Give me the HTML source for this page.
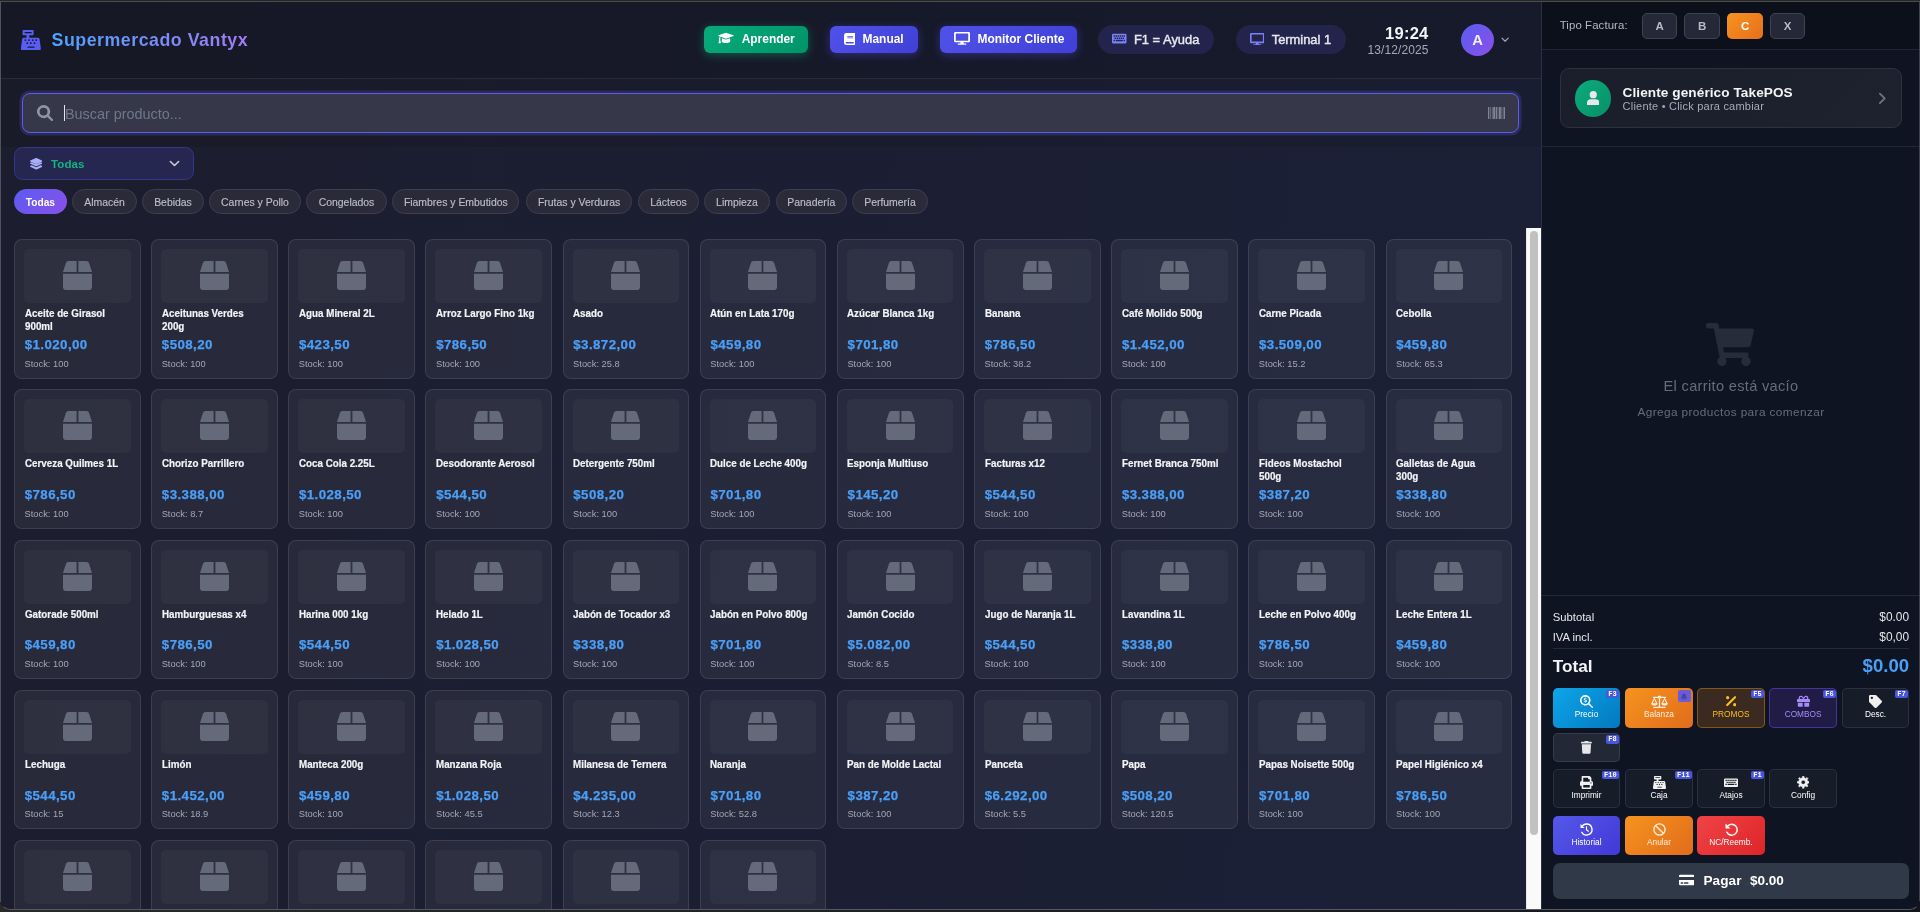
<!DOCTYPE html><html lang="es"><head><meta charset="utf-8"><title>Supermercado Vantyx - TakePOS</title><style>
*{box-sizing:border-box;margin:0;padding:0}
html,body{width:1920px;height:912px;overflow:hidden;background:linear-gradient(90deg,#2a2b27,#14151a)}
body{font-family:"Liberation Sans",sans-serif;color:#fff;position:relative;-webkit-font-smoothing:antialiased}
.abs{position:absolute}
#win{will-change:transform;position:absolute;left:0;top:0;width:1920px;height:910px;overflow:hidden;border-radius:0 0 10px 10px;background:#1a1a2e}
#left{position:absolute;left:1px;top:2px;width:1540px;height:908px;background:linear-gradient(95deg,#1c1d2e 0%,#1b2037 100%);overflow:hidden}
#header{position:absolute;left:0;top:0;width:1540px;height:77px;background:linear-gradient(90deg,#171826,#161a2b);border-bottom:1px solid #2b2c3a}
#searchsec{position:absolute;left:0;top:77px;width:1540px;height:68px;background:linear-gradient(90deg,#1a1b28,#191d31)}
#catsec{position:absolute;left:0;top:145px;width:1540px;height:82px}
.title{position:absolute;left:50.500px;top:27px;font-weight:bold;font-size:17.800px;line-height:22px;letter-spacing:.52px;white-space:nowrap;background:linear-gradient(90deg,#4ea4ff 0%,#7a8cf6 55%,#a27cf4 100%);-webkit-background-clip:text;background-clip:text;color:transparent}
.hbtn{position:absolute;top:24px;height:27px;border-radius:6px;color:#fff;font-weight:bold;font-size:11.950px;line-height:27.500px;white-space:nowrap}
.hbtn span{position:absolute;top:0}
.hbtn svg{position:absolute}
.pillh{position:absolute;top:23px;height:29px;border-radius:15px;background:#23244b;color:#e8e9f0;-webkit-text-stroke:.4px #e8e9f0;font-size:12.900px;line-height:29px;white-space:nowrap}
.pillh span{position:absolute;top:0}
.pillh svg{position:absolute}
.search{position:absolute;left:21px;top:14px;width:1497px;height:40px;border-radius:8px;background:#363748;border:1.500px solid #5a5df0;box-shadow:0 0 0 2.500px rgba(99,102,241,.22)}
.cat{position:absolute;top:42.300px;height:24.500px;border-radius:13px;border:1px solid #3d3e4f;background:#2a2a39;color:#bbbeca;font-size:10.450px;line-height:25.800px;-webkit-text-stroke:.15px #bbbeca;text-align:center;white-space:nowrap}
.cat.on{border:0;-webkit-text-stroke:0;font-size:10.200px;background:linear-gradient(135deg,#5a5cf0,#8a50ea);color:#fff;font-weight:bold;line-height:28.600px}
.card{position:absolute;width:126.700px;height:139.600px;border-radius:8px;background:rgba(255,255,255,.055);border:1px solid rgba(255,255,255,.15);background-clip:padding-box}
.card .img{position:absolute;left:9px;top:9px;width:106.600px;height:54px;border-radius:5px;background:rgba(255,255,255,.035)}
.card .img svg{position:absolute;left:38.700px;top:12px}
.card .nm{position:absolute;left:9.500px;top:67px;width:130px;font-size:10.600px;font-weight:bold;line-height:12.700px;color:#f3f4f6;-webkit-text-stroke:.2px #f3f4f6;white-space:nowrap;transform:scaleX(.925);transform-origin:0 0}
.card .pr{position:absolute;left:9.700px;top:95.900px;font-size:13.300px;letter-spacing:.42px;font-weight:bold;line-height:17px;color:#4a9ff8;-webkit-text-stroke:.25px #4a9ff8;white-space:nowrap}
.card .st{position:absolute;left:9.500px;top:117.600px;font-size:9.330px;line-height:12px;color:#a3a7b4;white-space:nowrap}
#right{position:absolute;left:1541px;top:2px;width:378px;height:908px;background:#0f1422;border-left:1px solid #2d3045;overflow:hidden}
.tf{position:absolute;top:11px;height:26px;border-radius:5px;border:1px solid #3e4352;background:#252937;color:#b6bac6;font-weight:bold;font-size:11.500px;line-height:24px;text-align:center}
.tf.on{border:0;background:linear-gradient(135deg,#f7931e,#e66f1c);color:#fff;line-height:26px}
.ab{position:absolute;width:67.700px;height:39.500px;border-radius:5px;font-size:8.300px;color:#fff;text-align:center}
.ab svg{position:absolute}
.ab .lb{position:absolute;left:0;width:100%;top:20.900px;line-height:10px;white-space:nowrap}
.ab .k{position:absolute;right:1.200px;top:2.100px;height:8.200px;padding:0 2.200px;background:#4a55e0;border-radius:2px;font-family:"Liberation Mono",monospace;font-weight:bold;font-size:7px;line-height:8.400px;color:#fff}
.dk{background:#171c29;box-shadow:inset 0 0 0 1px #2b3040}
</style></head><body>
<div id="win">
<div id="left">
<div id="header">
<div class="abs" style="left:20.300px;top:27.800px"><svg viewBox="0 0 512 512" width="19.8" height="20.2" preserveAspectRatio="none" fill="#585ef3" style="display:block;color:#585ef3;"><path fill-rule="evenodd" d="M61 0h246a20 20 0 0 1 20 20v93a20 20 0 0 1-20 20h-92v62h225a40 40 0 0 1 38 28l32 217v40a32 32 0 0 1-32 32H32a32 32 0 0 1-32-32v-40l32-217a40 40 0 0 1 38-28h73v-62H61a20 20 0 0 1-20-20V20A20 20 0 0 1 61 0zm44 52a15 15 0 0 0 0 30h158a15 15 0 0 0 0-30zM89 256a24 24 0 1 0 48 0a24 24 0 1 0-48 0zM184 256a24 24 0 1 0 48 0a24 24 0 1 0-48 0zM279 256a24 24 0 1 0 48 0a24 24 0 1 0-48 0zM370 256a24 24 0 1 0 48 0a24 24 0 1 0-48 0zM139 334a24 24 0 1 0 48 0a24 24 0 1 0-48 0zM230 334a24 24 0 1 0 48 0a24 24 0 1 0-48 0zM325 334a24 24 0 1 0 48 0a24 24 0 1 0-48 0zM184 420a16 16 0 0 0 0 32h153a16 16 0 0 0 0-32z"/></svg></div>
<div class="title">Supermercado Vantyx</div>
<div class="hbtn" style="left:703px;width:104px;background:linear-gradient(135deg,#08aa7a,#009468);box-shadow:0 2px 10px rgba(16,185,129,.4)"><svg viewBox="0 0 640 512" width="15.9" height="13.3" preserveAspectRatio="none" fill="#fff" style="display:block;color:#fff;position:absolute;left:14.299999999999955px;top:5.300000000000001px"><path d="M320 64L16 168c-14 5-14 22 0 27l58 20c-12 16-19 35-20 56c-11 6-18 18-18 31c0 12 6 23 15 29L20 452c-2 10 5 20 15 20h66c10 0 17-10 15-20L86 331c9-6 15-17 15-29c0-13-7-24-17-30c1-18 9-34 22-46l214 73L624 195c14-5 14-22 0-27z"/><path d="M330 330a32 32 0 0 1-20 0L160 279l-14 115c0 40 78 70 174 70s174-30 174-70l-14-115z"/></svg><span style="left:37.700000000000045px">Aprender</span></div>
<div class="hbtn" style="left:829px;width:88px;background:linear-gradient(135deg,#4f52e8,#4040d8);box-shadow:0 2px 10px rgba(79,70,229,.45)"><svg viewBox="0 0 448 512" width="11.4" height="12" preserveAspectRatio="none" fill="#fff" style="display:block;color:#fff;position:absolute;left:13.799999999999955px;top:6.5px"><path fill-rule="evenodd" d="M448 360V24a24 24 0 0 0-24-24H96A96 96 0 0 0 0 96v320a96 96 0 0 0 96 96h328a24 24 0 0 0 24-24v-16c0-8-4-14-9-19c-4-15-4-59 0-74c5-4 9-11 9-19zM128 134c0-3 3-6 6-6h212c3 0 6 3 6 6v20c0 3-3 6-6 6H134c-3 0-6-3-6-6zm0 64c0-3 3-6 6-6h212c3 0 6 3 6 6v20c0 3-3 6-6 6H134c-3 0-6-3-6-6zM381 448H96a32 32 0 0 1 0-64h285c-2 17-2 47 0 64z"/></svg><span style="left:32.5px">Manual</span></div>
<div class="hbtn" style="left:939px;width:137px;background:linear-gradient(135deg,#4f52e8,#4040d8);box-shadow:0 2px 10px rgba(79,70,229,.45)"><svg viewBox="0 0 576 512" width="16" height="12.7" preserveAspectRatio="none" fill="#fff" style="display:block;color:#fff;position:absolute;left:14px;top:5.899999999999999px"><path fill-rule="evenodd" d="M48 0h480a48 48 0 0 1 48 48v320a48 48 0 0 1-48 48H336l16 48h72a24 24 0 0 1 0 48H152a24 24 0 0 1 0-48h72l16-48H48a48 48 0 0 1-48-48V48A48 48 0 0 1 48 0zm16 64v288h448V64z"/></svg><span style="left:37.5px">Monitor Cliente</span></div>
<div class="pillh" style="left:1097px;width:116px"><svg viewBox="0 0 576 512" width="14.5" height="13.2" preserveAspectRatio="none" fill="#7b80f7" style="display:block;color:#7b80f7;position:absolute;left:14.200000000000045px;top:6.600000000000001px"><path fill-rule="evenodd" d="M48 64h480a48 48 0 0 1 48 48v288a48 48 0 0 1-48 48H48a48 48 0 0 1-48-48V112a48 48 0 0 1 48-48zM60 124h56v56h-56zM140 124h56v56h-56zM220 124h56v56h-56zM300 124h56v56h-56zM380 124h56v56h-56zM460 124h56v56h-56zM100 212h56v56h-56zM180 212h56v56h-56zM260 212h56v56h-56zM340 212h56v56h-56zM420 212h56v56h-56zM60 300h56v56H60zM460 300h56v56h-56zM148 300h280v56H148z"/></svg><span style="left:36px">F1 = Ayuda</span></div>
<div class="pillh" style="left:1235px;width:110px"><svg viewBox="0 0 576 512" width="14.5" height="12.5" preserveAspectRatio="none" fill="#7b80f7" style="display:block;color:#7b80f7;position:absolute;left:13.700000000000045px;top:7.5px"><path fill-rule="evenodd" d="M48 0h480a48 48 0 0 1 48 48v320a48 48 0 0 1-48 48H336l16 48h72a24 24 0 0 1 0 48H152a24 24 0 0 1 0-48h72l16-48H48a48 48 0 0 1-48-48V48A48 48 0 0 1 48 0zm16 64v288h448V64z"/></svg><span style="left:35.700000000000045px">Terminal 1</span></div>
<div class="abs" style="left:1347px;width:80.500px;top:22.500px;text-align:right;font-weight:bold;font-size:16.600px;line-height:18px;color:#f3f4f6;letter-spacing:.2px">19:24</div>
<div class="abs" style="left:1347px;width:80.500px;top:41.500px;text-align:right;font-size:12px;line-height:13px;color:#a4a8b6;letter-spacing:.1px">13/12/2025</div>
<div class="abs" style="left:1460px;top:22px;width:33px;height:32px;border-radius:50%;background:linear-gradient(135deg,#5a5cf0,#8a50ea);text-align:center;font-weight:bold;font-size:14.800px;line-height:32.500px;color:#efeff6">A</div>
<div class="abs" style="left:1500px;top:34.800px"><svg viewBox="0 0 24 16" width="8.2" height="5.4" preserveAspectRatio="none" fill="#a0a5b3" style="display:block;color:#a0a5b3;"><path d="M3 3.500l9 9l9-9" fill="none" stroke="currentColor" stroke-width="3.600" stroke-linecap="round" stroke-linejoin="round"/></svg></div>
</div>
<div id="searchsec"><div class="search">
<div class="abs" style="left:13.500px;top:11.200px"><svg viewBox="0 0 512 512" width="16.2" height="16.2" preserveAspectRatio="none" fill="#8e94a3" style="display:block;color:#8e94a3;"><path fill-rule="evenodd" d="M208 0a208 208 0 0 1 171 326L500 447a37 37 0 0 1-53 53L326 379A208 208 0 1 1 208 0zm0 84a124 124 0 1 0 0 248a124 124 0 0 0 0-248z"/></svg></div>
<div class="abs" style="left:41px;top:11px;width:1.200px;height:16.400px;background:#e5e7eb"></div>
<div class="abs" style="left:42px;top:9.800px;font-size:14.400px;line-height:20px;color:#6f788a;letter-spacing:0">Buscar producto...</div>
<div class="abs" style="left:1464.500px;top:12.500px"><svg viewBox="0 0 512 512" width="17.2" height="12.4" preserveAspectRatio="none" fill="#7f8393" style="display:block;color:#7f8393;"><rect x="0" y="0" width="38" height="512"/><rect x="58" y="0" width="19" height="512"/><rect x="115" y="0" width="19" height="512"/><rect x="154" y="0" width="57" height="512"/><rect x="230" y="0" width="38" height="512"/><rect x="288" y="0" width="19" height="512"/><rect x="326" y="0" width="57" height="512"/><rect x="403" y="0" width="19" height="512"/><rect x="442" y="0" width="19" height="512"/><rect x="474" y="0" width="38" height="512"/></svg></div>
</div></div>
<div id="catsec">
<div class="abs" style="left:13px;top:0px;width:180px;height:33px;border-radius:8.500px;background:#252750;border:1px solid #34378a">
<div class="abs" style="left:14.500px;top:9px"><svg viewBox="0 0 512 512" width="12.5" height="12.5" preserveAspectRatio="none" fill="#a9aef8" style="display:block;color:#a9aef8;"><path d="M12 148L244 43a29 29 0 0 1 24 0l232 105c16 7 16 30 0 38L268 291a29 29 0 0 1-24 0L12 186c-16-8-16-31 0-38z"/><path d="M500 238l-58-26l-161 73a60 60 0 0 1-50 0L70 212l-58 26c-16 7-16 30 0 37l232 105a29 29 0 0 0 24 0l232-105c16-7 16-30 0-37z"/><path d="M500 366l-58-26l-161 73a60 60 0 0 1-50 0L70 340l-58 26c-16 7-16 30 0 37l232 105a29 29 0 0 0 24 0l232-105c16-7 16-30 0-37z"/></svg></div>
<div class="abs" style="left:36px;top:8.600px;font-weight:bold;font-size:11.500px;line-height:15px;color:#12b580;letter-spacing:.1px">Todas</div>
<div class="abs" style="left:154px;top:12px"><svg viewBox="0 0 24 16" width="11" height="7" preserveAspectRatio="none" fill="#c5c8d4" style="display:block;color:#c5c8d4;"><path d="M3 3.500l9 9l9-9" fill="none" stroke="currentColor" stroke-width="3.600" stroke-linecap="round" stroke-linejoin="round"/></svg></div>
</div>
<div class="cat on" style="left:13.0px;width:52.7px">Todas</div>
<div class="cat" style="left:71.3px;width:64.4px">Almacén</div>
<div class="cat" style="left:141.3px;width:61.4px">Bebidas</div>
<div class="cat" style="left:208.3px;width:91.4px">Carnes y Pollo</div>
<div class="cat" style="left:305.3px;width:80.4px">Congelados</div>
<div class="cat" style="left:391.3px;width:127.0px">Fiambres y Embutidos</div>
<div class="cat" style="left:525.0px;width:106.3px">Frutas y Verduras</div>
<div class="cat" style="left:637.0px;width:61.0px">Lácteos</div>
<div class="cat" style="left:703.3px;width:65.4px">Limpieza</div>
<div class="cat" style="left:775.0px;width:70.7px">Panadería</div>
<div class="cat" style="left:851.3px;width:75.4px">Perfumería</div>
</div>
<div class="card" style="left:13.00px;top:237.20px"><div class="img"><svg viewBox="0 0 512 512" width="29" height="29" preserveAspectRatio="none" fill="#656a7b" style="display:block;color:#656a7b;"><path d="M509.5 184.6L458.900 32.800C452.400 13.200 434.100 0 413.400 0H272v192h238.700c-.4-2.500-.4-5-1.200-7.400zM240 0H98.600c-20.700 0-39 13.200-45.500 32.800L2.500 184.600c-.8 2.400-.8 4.900-1.200 7.400H240V0zM0 224v240c0 26.500 21.500 48 48 48h416c26.500 0 48-21.500 48-48V224H0z"/></svg></div><div class="nm">Aceite de Girasol<br>900ml</div><div class="pr">$1.020,00</div><div class="st">Stock: 100</div></div>
<div class="card" style="left:150.15px;top:237.20px"><div class="img"><svg viewBox="0 0 512 512" width="29" height="29" preserveAspectRatio="none" fill="#656a7b" style="display:block;color:#656a7b;"><path d="M509.5 184.6L458.900 32.800C452.400 13.200 434.100 0 413.400 0H272v192h238.700c-.4-2.500-.4-5-1.200-7.400zM240 0H98.600c-20.700 0-39 13.200-45.500 32.800L2.500 184.600c-.8 2.400-.8 4.900-1.200 7.400H240V0zM0 224v240c0 26.500 21.500 48 48 48h416c26.500 0 48-21.500 48-48V224H0z"/></svg></div><div class="nm">Aceitunas Verdes<br>200g</div><div class="pr">$508,20</div><div class="st">Stock: 100</div></div>
<div class="card" style="left:287.30px;top:237.20px"><div class="img"><svg viewBox="0 0 512 512" width="29" height="29" preserveAspectRatio="none" fill="#656a7b" style="display:block;color:#656a7b;"><path d="M509.5 184.6L458.900 32.800C452.400 13.200 434.100 0 413.400 0H272v192h238.700c-.4-2.500-.4-5-1.200-7.400zM240 0H98.600c-20.700 0-39 13.200-45.500 32.800L2.500 184.600c-.8 2.400-.8 4.900-1.200 7.400H240V0zM0 224v240c0 26.500 21.500 48 48 48h416c26.500 0 48-21.500 48-48V224H0z"/></svg></div><div class="nm">Agua Mineral 2L</div><div class="pr">$423,50</div><div class="st">Stock: 100</div></div>
<div class="card" style="left:424.45px;top:237.20px"><div class="img"><svg viewBox="0 0 512 512" width="29" height="29" preserveAspectRatio="none" fill="#656a7b" style="display:block;color:#656a7b;"><path d="M509.5 184.6L458.900 32.800C452.400 13.200 434.100 0 413.400 0H272v192h238.700c-.4-2.500-.4-5-1.200-7.400zM240 0H98.600c-20.700 0-39 13.200-45.500 32.800L2.500 184.600c-.8 2.400-.8 4.900-1.200 7.400H240V0zM0 224v240c0 26.500 21.500 48 48 48h416c26.500 0 48-21.500 48-48V224H0z"/></svg></div><div class="nm">Arroz Largo Fino 1kg</div><div class="pr">$786,50</div><div class="st">Stock: 100</div></div>
<div class="card" style="left:561.60px;top:237.20px"><div class="img"><svg viewBox="0 0 512 512" width="29" height="29" preserveAspectRatio="none" fill="#656a7b" style="display:block;color:#656a7b;"><path d="M509.5 184.6L458.900 32.800C452.400 13.200 434.100 0 413.400 0H272v192h238.700c-.4-2.500-.4-5-1.200-7.400zM240 0H98.600c-20.700 0-39 13.200-45.500 32.800L2.500 184.600c-.8 2.400-.8 4.900-1.200 7.400H240V0zM0 224v240c0 26.500 21.500 48 48 48h416c26.500 0 48-21.500 48-48V224H0z"/></svg></div><div class="nm">Asado</div><div class="pr">$3.872,00</div><div class="st">Stock: 25.8</div></div>
<div class="card" style="left:698.75px;top:237.20px"><div class="img"><svg viewBox="0 0 512 512" width="29" height="29" preserveAspectRatio="none" fill="#656a7b" style="display:block;color:#656a7b;"><path d="M509.5 184.6L458.900 32.800C452.400 13.200 434.100 0 413.400 0H272v192h238.700c-.4-2.500-.4-5-1.200-7.400zM240 0H98.600c-20.700 0-39 13.200-45.500 32.800L2.500 184.600c-.8 2.400-.8 4.900-1.200 7.400H240V0zM0 224v240c0 26.500 21.500 48 48 48h416c26.500 0 48-21.500 48-48V224H0z"/></svg></div><div class="nm">Atún en Lata 170g</div><div class="pr">$459,80</div><div class="st">Stock: 100</div></div>
<div class="card" style="left:835.90px;top:237.20px"><div class="img"><svg viewBox="0 0 512 512" width="29" height="29" preserveAspectRatio="none" fill="#656a7b" style="display:block;color:#656a7b;"><path d="M509.5 184.6L458.900 32.800C452.400 13.200 434.100 0 413.400 0H272v192h238.700c-.4-2.500-.4-5-1.200-7.400zM240 0H98.600c-20.700 0-39 13.200-45.500 32.800L2.500 184.600c-.8 2.400-.8 4.900-1.200 7.400H240V0zM0 224v240c0 26.500 21.500 48 48 48h416c26.500 0 48-21.500 48-48V224H0z"/></svg></div><div class="nm">Azúcar Blanca 1kg</div><div class="pr">$701,80</div><div class="st">Stock: 100</div></div>
<div class="card" style="left:973.05px;top:237.20px"><div class="img"><svg viewBox="0 0 512 512" width="29" height="29" preserveAspectRatio="none" fill="#656a7b" style="display:block;color:#656a7b;"><path d="M509.5 184.6L458.900 32.800C452.400 13.200 434.100 0 413.400 0H272v192h238.700c-.4-2.500-.4-5-1.200-7.400zM240 0H98.600c-20.700 0-39 13.200-45.500 32.800L2.500 184.600c-.8 2.400-.8 4.900-1.200 7.400H240V0zM0 224v240c0 26.500 21.500 48 48 48h416c26.500 0 48-21.500 48-48V224H0z"/></svg></div><div class="nm">Banana</div><div class="pr">$786,50</div><div class="st">Stock: 38.2</div></div>
<div class="card" style="left:1110.20px;top:237.20px"><div class="img"><svg viewBox="0 0 512 512" width="29" height="29" preserveAspectRatio="none" fill="#656a7b" style="display:block;color:#656a7b;"><path d="M509.5 184.6L458.900 32.800C452.400 13.200 434.100 0 413.400 0H272v192h238.700c-.4-2.500-.4-5-1.200-7.400zM240 0H98.600c-20.700 0-39 13.200-45.500 32.800L2.500 184.600c-.8 2.400-.8 4.900-1.200 7.400H240V0zM0 224v240c0 26.500 21.500 48 48 48h416c26.500 0 48-21.500 48-48V224H0z"/></svg></div><div class="nm">Café Molido 500g</div><div class="pr">$1.452,00</div><div class="st">Stock: 100</div></div>
<div class="card" style="left:1247.35px;top:237.20px"><div class="img"><svg viewBox="0 0 512 512" width="29" height="29" preserveAspectRatio="none" fill="#656a7b" style="display:block;color:#656a7b;"><path d="M509.5 184.6L458.900 32.800C452.400 13.200 434.100 0 413.400 0H272v192h238.700c-.4-2.500-.4-5-1.200-7.400zM240 0H98.600c-20.700 0-39 13.200-45.500 32.800L2.500 184.600c-.8 2.400-.8 4.900-1.200 7.400H240V0zM0 224v240c0 26.500 21.500 48 48 48h416c26.500 0 48-21.500 48-48V224H0z"/></svg></div><div class="nm">Carne Picada</div><div class="pr">$3.509,00</div><div class="st">Stock: 15.2</div></div>
<div class="card" style="left:1384.50px;top:237.20px"><div class="img"><svg viewBox="0 0 512 512" width="29" height="29" preserveAspectRatio="none" fill="#656a7b" style="display:block;color:#656a7b;"><path d="M509.5 184.6L458.900 32.800C452.400 13.200 434.100 0 413.400 0H272v192h238.700c-.4-2.500-.4-5-1.200-7.400zM240 0H98.600c-20.700 0-39 13.200-45.500 32.800L2.500 184.600c-.8 2.400-.8 4.900-1.200 7.400H240V0zM0 224v240c0 26.500 21.500 48 48 48h416c26.500 0 48-21.500 48-48V224H0z"/></svg></div><div class="nm">Cebolla</div><div class="pr">$459,80</div><div class="st">Stock: 65.3</div></div>
<div class="card" style="left:13.00px;top:387.40px"><div class="img"><svg viewBox="0 0 512 512" width="29" height="29" preserveAspectRatio="none" fill="#656a7b" style="display:block;color:#656a7b;"><path d="M509.5 184.6L458.900 32.800C452.400 13.200 434.100 0 413.400 0H272v192h238.700c-.4-2.500-.4-5-1.200-7.400zM240 0H98.600c-20.700 0-39 13.200-45.500 32.800L2.500 184.600c-.8 2.400-.8 4.900-1.200 7.400H240V0zM0 224v240c0 26.500 21.500 48 48 48h416c26.500 0 48-21.500 48-48V224H0z"/></svg></div><div class="nm">Cerveza Quilmes 1L</div><div class="pr">$786,50</div><div class="st">Stock: 100</div></div>
<div class="card" style="left:150.15px;top:387.40px"><div class="img"><svg viewBox="0 0 512 512" width="29" height="29" preserveAspectRatio="none" fill="#656a7b" style="display:block;color:#656a7b;"><path d="M509.5 184.6L458.900 32.800C452.400 13.200 434.100 0 413.400 0H272v192h238.700c-.4-2.500-.4-5-1.200-7.400zM240 0H98.600c-20.700 0-39 13.200-45.500 32.800L2.500 184.600c-.8 2.400-.8 4.900-1.200 7.400H240V0zM0 224v240c0 26.500 21.500 48 48 48h416c26.500 0 48-21.500 48-48V224H0z"/></svg></div><div class="nm">Chorizo Parrillero</div><div class="pr">$3.388,00</div><div class="st">Stock: 8.7</div></div>
<div class="card" style="left:287.30px;top:387.40px"><div class="img"><svg viewBox="0 0 512 512" width="29" height="29" preserveAspectRatio="none" fill="#656a7b" style="display:block;color:#656a7b;"><path d="M509.5 184.6L458.900 32.800C452.400 13.200 434.100 0 413.400 0H272v192h238.700c-.4-2.500-.4-5-1.200-7.400zM240 0H98.600c-20.700 0-39 13.200-45.500 32.800L2.500 184.600c-.8 2.400-.8 4.900-1.200 7.400H240V0zM0 224v240c0 26.500 21.500 48 48 48h416c26.500 0 48-21.500 48-48V224H0z"/></svg></div><div class="nm">Coca Cola 2.25L</div><div class="pr">$1.028,50</div><div class="st">Stock: 100</div></div>
<div class="card" style="left:424.45px;top:387.40px"><div class="img"><svg viewBox="0 0 512 512" width="29" height="29" preserveAspectRatio="none" fill="#656a7b" style="display:block;color:#656a7b;"><path d="M509.5 184.6L458.900 32.800C452.400 13.200 434.100 0 413.400 0H272v192h238.700c-.4-2.500-.4-5-1.200-7.400zM240 0H98.600c-20.700 0-39 13.200-45.500 32.800L2.500 184.600c-.8 2.400-.8 4.900-1.200 7.400H240V0zM0 224v240c0 26.500 21.500 48 48 48h416c26.500 0 48-21.500 48-48V224H0z"/></svg></div><div class="nm">Desodorante Aerosol</div><div class="pr">$544,50</div><div class="st">Stock: 100</div></div>
<div class="card" style="left:561.60px;top:387.40px"><div class="img"><svg viewBox="0 0 512 512" width="29" height="29" preserveAspectRatio="none" fill="#656a7b" style="display:block;color:#656a7b;"><path d="M509.5 184.6L458.900 32.800C452.400 13.200 434.100 0 413.400 0H272v192h238.700c-.4-2.500-.4-5-1.200-7.400zM240 0H98.600c-20.700 0-39 13.200-45.500 32.800L2.500 184.600c-.8 2.400-.8 4.900-1.200 7.400H240V0zM0 224v240c0 26.500 21.500 48 48 48h416c26.500 0 48-21.500 48-48V224H0z"/></svg></div><div class="nm">Detergente 750ml</div><div class="pr">$508,20</div><div class="st">Stock: 100</div></div>
<div class="card" style="left:698.75px;top:387.40px"><div class="img"><svg viewBox="0 0 512 512" width="29" height="29" preserveAspectRatio="none" fill="#656a7b" style="display:block;color:#656a7b;"><path d="M509.5 184.6L458.900 32.800C452.400 13.200 434.100 0 413.400 0H272v192h238.700c-.4-2.500-.4-5-1.200-7.400zM240 0H98.600c-20.700 0-39 13.200-45.500 32.800L2.500 184.600c-.8 2.400-.8 4.900-1.200 7.400H240V0zM0 224v240c0 26.500 21.500 48 48 48h416c26.500 0 48-21.500 48-48V224H0z"/></svg></div><div class="nm">Dulce de Leche 400g</div><div class="pr">$701,80</div><div class="st">Stock: 100</div></div>
<div class="card" style="left:835.90px;top:387.40px"><div class="img"><svg viewBox="0 0 512 512" width="29" height="29" preserveAspectRatio="none" fill="#656a7b" style="display:block;color:#656a7b;"><path d="M509.5 184.6L458.900 32.800C452.400 13.200 434.100 0 413.400 0H272v192h238.700c-.4-2.500-.4-5-1.200-7.400zM240 0H98.600c-20.700 0-39 13.200-45.500 32.800L2.500 184.600c-.8 2.400-.8 4.900-1.200 7.400H240V0zM0 224v240c0 26.500 21.500 48 48 48h416c26.500 0 48-21.500 48-48V224H0z"/></svg></div><div class="nm">Esponja Multiuso</div><div class="pr">$145,20</div><div class="st">Stock: 100</div></div>
<div class="card" style="left:973.05px;top:387.40px"><div class="img"><svg viewBox="0 0 512 512" width="29" height="29" preserveAspectRatio="none" fill="#656a7b" style="display:block;color:#656a7b;"><path d="M509.5 184.6L458.900 32.800C452.400 13.200 434.100 0 413.400 0H272v192h238.700c-.4-2.500-.4-5-1.200-7.400zM240 0H98.600c-20.700 0-39 13.200-45.500 32.800L2.500 184.600c-.8 2.400-.8 4.900-1.200 7.400H240V0zM0 224v240c0 26.500 21.500 48 48 48h416c26.500 0 48-21.500 48-48V224H0z"/></svg></div><div class="nm">Facturas x12</div><div class="pr">$544,50</div><div class="st">Stock: 100</div></div>
<div class="card" style="left:1110.20px;top:387.40px"><div class="img"><svg viewBox="0 0 512 512" width="29" height="29" preserveAspectRatio="none" fill="#656a7b" style="display:block;color:#656a7b;"><path d="M509.5 184.6L458.900 32.800C452.400 13.200 434.100 0 413.400 0H272v192h238.700c-.4-2.500-.4-5-1.200-7.400zM240 0H98.600c-20.700 0-39 13.200-45.500 32.800L2.500 184.600c-.8 2.400-.8 4.900-1.200 7.400H240V0zM0 224v240c0 26.500 21.500 48 48 48h416c26.500 0 48-21.500 48-48V224H0z"/></svg></div><div class="nm">Fernet Branca 750ml</div><div class="pr">$3.388,00</div><div class="st">Stock: 100</div></div>
<div class="card" style="left:1247.35px;top:387.40px"><div class="img"><svg viewBox="0 0 512 512" width="29" height="29" preserveAspectRatio="none" fill="#656a7b" style="display:block;color:#656a7b;"><path d="M509.5 184.6L458.900 32.800C452.400 13.200 434.100 0 413.400 0H272v192h238.700c-.4-2.500-.4-5-1.200-7.400zM240 0H98.600c-20.700 0-39 13.200-45.500 32.800L2.500 184.600c-.8 2.400-.8 4.900-1.200 7.400H240V0zM0 224v240c0 26.500 21.500 48 48 48h416c26.500 0 48-21.500 48-48V224H0z"/></svg></div><div class="nm">Fideos Mostachol<br>500g</div><div class="pr">$387,20</div><div class="st">Stock: 100</div></div>
<div class="card" style="left:1384.50px;top:387.40px"><div class="img"><svg viewBox="0 0 512 512" width="29" height="29" preserveAspectRatio="none" fill="#656a7b" style="display:block;color:#656a7b;"><path d="M509.5 184.6L458.900 32.800C452.400 13.200 434.100 0 413.400 0H272v192h238.700c-.4-2.500-.4-5-1.200-7.400zM240 0H98.600c-20.700 0-39 13.200-45.500 32.800L2.500 184.600c-.8 2.400-.8 4.900-1.200 7.400H240V0zM0 224v240c0 26.500 21.500 48 48 48h416c26.500 0 48-21.500 48-48V224H0z"/></svg></div><div class="nm">Galletas de Agua<br>300g</div><div class="pr">$338,80</div><div class="st">Stock: 100</div></div>
<div class="card" style="left:13.00px;top:537.60px"><div class="img"><svg viewBox="0 0 512 512" width="29" height="29" preserveAspectRatio="none" fill="#656a7b" style="display:block;color:#656a7b;"><path d="M509.5 184.6L458.900 32.800C452.400 13.200 434.100 0 413.400 0H272v192h238.700c-.4-2.500-.4-5-1.200-7.400zM240 0H98.600c-20.700 0-39 13.200-45.500 32.800L2.500 184.600c-.8 2.400-.8 4.900-1.200 7.400H240V0zM0 224v240c0 26.500 21.500 48 48 48h416c26.500 0 48-21.500 48-48V224H0z"/></svg></div><div class="nm">Gatorade 500ml</div><div class="pr">$459,80</div><div class="st">Stock: 100</div></div>
<div class="card" style="left:150.15px;top:537.60px"><div class="img"><svg viewBox="0 0 512 512" width="29" height="29" preserveAspectRatio="none" fill="#656a7b" style="display:block;color:#656a7b;"><path d="M509.5 184.6L458.900 32.800C452.400 13.200 434.100 0 413.400 0H272v192h238.700c-.4-2.500-.4-5-1.200-7.400zM240 0H98.600c-20.700 0-39 13.200-45.500 32.800L2.500 184.600c-.8 2.400-.8 4.900-1.200 7.400H240V0zM0 224v240c0 26.500 21.500 48 48 48h416c26.500 0 48-21.500 48-48V224H0z"/></svg></div><div class="nm">Hamburguesas x4</div><div class="pr">$786,50</div><div class="st">Stock: 100</div></div>
<div class="card" style="left:287.30px;top:537.60px"><div class="img"><svg viewBox="0 0 512 512" width="29" height="29" preserveAspectRatio="none" fill="#656a7b" style="display:block;color:#656a7b;"><path d="M509.5 184.6L458.900 32.800C452.400 13.200 434.100 0 413.400 0H272v192h238.700c-.4-2.500-.4-5-1.200-7.400zM240 0H98.600c-20.700 0-39 13.200-45.500 32.800L2.500 184.600c-.8 2.400-.8 4.900-1.200 7.400H240V0zM0 224v240c0 26.500 21.500 48 48 48h416c26.500 0 48-21.500 48-48V224H0z"/></svg></div><div class="nm">Harina 000 1kg</div><div class="pr">$544,50</div><div class="st">Stock: 100</div></div>
<div class="card" style="left:424.45px;top:537.60px"><div class="img"><svg viewBox="0 0 512 512" width="29" height="29" preserveAspectRatio="none" fill="#656a7b" style="display:block;color:#656a7b;"><path d="M509.5 184.6L458.900 32.800C452.400 13.200 434.100 0 413.400 0H272v192h238.700c-.4-2.500-.4-5-1.200-7.400zM240 0H98.600c-20.700 0-39 13.200-45.500 32.800L2.500 184.600c-.8 2.400-.8 4.900-1.200 7.400H240V0zM0 224v240c0 26.500 21.500 48 48 48h416c26.500 0 48-21.500 48-48V224H0z"/></svg></div><div class="nm">Helado 1L</div><div class="pr">$1.028,50</div><div class="st">Stock: 100</div></div>
<div class="card" style="left:561.60px;top:537.60px"><div class="img"><svg viewBox="0 0 512 512" width="29" height="29" preserveAspectRatio="none" fill="#656a7b" style="display:block;color:#656a7b;"><path d="M509.5 184.6L458.900 32.800C452.400 13.200 434.100 0 413.400 0H272v192h238.700c-.4-2.500-.4-5-1.200-7.400zM240 0H98.600c-20.700 0-39 13.200-45.500 32.800L2.500 184.600c-.8 2.400-.8 4.900-1.200 7.400H240V0zM0 224v240c0 26.500 21.500 48 48 48h416c26.500 0 48-21.500 48-48V224H0z"/></svg></div><div class="nm">Jabón de Tocador x3</div><div class="pr">$338,80</div><div class="st">Stock: 100</div></div>
<div class="card" style="left:698.75px;top:537.60px"><div class="img"><svg viewBox="0 0 512 512" width="29" height="29" preserveAspectRatio="none" fill="#656a7b" style="display:block;color:#656a7b;"><path d="M509.5 184.6L458.900 32.800C452.400 13.200 434.100 0 413.400 0H272v192h238.700c-.4-2.500-.4-5-1.200-7.400zM240 0H98.600c-20.700 0-39 13.200-45.500 32.800L2.500 184.600c-.8 2.400-.8 4.900-1.200 7.400H240V0zM0 224v240c0 26.500 21.500 48 48 48h416c26.500 0 48-21.500 48-48V224H0z"/></svg></div><div class="nm">Jabón en Polvo 800g</div><div class="pr">$701,80</div><div class="st">Stock: 100</div></div>
<div class="card" style="left:835.90px;top:537.60px"><div class="img"><svg viewBox="0 0 512 512" width="29" height="29" preserveAspectRatio="none" fill="#656a7b" style="display:block;color:#656a7b;"><path d="M509.5 184.6L458.900 32.800C452.400 13.200 434.100 0 413.400 0H272v192h238.700c-.4-2.500-.4-5-1.200-7.400zM240 0H98.600c-20.700 0-39 13.200-45.500 32.800L2.500 184.600c-.8 2.400-.8 4.900-1.200 7.400H240V0zM0 224v240c0 26.500 21.500 48 48 48h416c26.500 0 48-21.500 48-48V224H0z"/></svg></div><div class="nm">Jamón Cocido</div><div class="pr">$5.082,00</div><div class="st">Stock: 8.5</div></div>
<div class="card" style="left:973.05px;top:537.60px"><div class="img"><svg viewBox="0 0 512 512" width="29" height="29" preserveAspectRatio="none" fill="#656a7b" style="display:block;color:#656a7b;"><path d="M509.5 184.6L458.900 32.800C452.400 13.200 434.100 0 413.400 0H272v192h238.700c-.4-2.500-.4-5-1.200-7.400zM240 0H98.600c-20.700 0-39 13.200-45.500 32.800L2.500 184.600c-.8 2.400-.8 4.900-1.200 7.400H240V0zM0 224v240c0 26.500 21.500 48 48 48h416c26.500 0 48-21.500 48-48V224H0z"/></svg></div><div class="nm">Jugo de Naranja 1L</div><div class="pr">$544,50</div><div class="st">Stock: 100</div></div>
<div class="card" style="left:1110.20px;top:537.60px"><div class="img"><svg viewBox="0 0 512 512" width="29" height="29" preserveAspectRatio="none" fill="#656a7b" style="display:block;color:#656a7b;"><path d="M509.5 184.6L458.900 32.800C452.400 13.200 434.100 0 413.400 0H272v192h238.700c-.4-2.500-.4-5-1.200-7.400zM240 0H98.600c-20.700 0-39 13.200-45.500 32.800L2.500 184.600c-.8 2.400-.8 4.900-1.200 7.400H240V0zM0 224v240c0 26.500 21.500 48 48 48h416c26.500 0 48-21.500 48-48V224H0z"/></svg></div><div class="nm">Lavandina 1L</div><div class="pr">$338,80</div><div class="st">Stock: 100</div></div>
<div class="card" style="left:1247.35px;top:537.60px"><div class="img"><svg viewBox="0 0 512 512" width="29" height="29" preserveAspectRatio="none" fill="#656a7b" style="display:block;color:#656a7b;"><path d="M509.5 184.6L458.900 32.800C452.400 13.200 434.100 0 413.400 0H272v192h238.700c-.4-2.500-.4-5-1.200-7.400zM240 0H98.600c-20.700 0-39 13.200-45.500 32.800L2.500 184.600c-.8 2.400-.8 4.900-1.200 7.400H240V0zM0 224v240c0 26.500 21.500 48 48 48h416c26.500 0 48-21.500 48-48V224H0z"/></svg></div><div class="nm">Leche en Polvo 400g</div><div class="pr">$786,50</div><div class="st">Stock: 100</div></div>
<div class="card" style="left:1384.50px;top:537.60px"><div class="img"><svg viewBox="0 0 512 512" width="29" height="29" preserveAspectRatio="none" fill="#656a7b" style="display:block;color:#656a7b;"><path d="M509.5 184.6L458.900 32.800C452.400 13.200 434.100 0 413.400 0H272v192h238.700c-.4-2.500-.4-5-1.200-7.400zM240 0H98.600c-20.700 0-39 13.200-45.500 32.800L2.500 184.600c-.8 2.400-.8 4.900-1.200 7.400H240V0zM0 224v240c0 26.500 21.500 48 48 48h416c26.500 0 48-21.500 48-48V224H0z"/></svg></div><div class="nm">Leche Entera 1L</div><div class="pr">$459,80</div><div class="st">Stock: 100</div></div>
<div class="card" style="left:13.00px;top:687.80px"><div class="img"><svg viewBox="0 0 512 512" width="29" height="29" preserveAspectRatio="none" fill="#656a7b" style="display:block;color:#656a7b;"><path d="M509.5 184.6L458.900 32.800C452.400 13.200 434.100 0 413.400 0H272v192h238.700c-.4-2.500-.4-5-1.200-7.400zM240 0H98.600c-20.700 0-39 13.200-45.500 32.800L2.500 184.600c-.8 2.400-.8 4.900-1.200 7.400H240V0zM0 224v240c0 26.500 21.500 48 48 48h416c26.500 0 48-21.500 48-48V224H0z"/></svg></div><div class="nm">Lechuga</div><div class="pr">$544,50</div><div class="st">Stock: 15</div></div>
<div class="card" style="left:150.15px;top:687.80px"><div class="img"><svg viewBox="0 0 512 512" width="29" height="29" preserveAspectRatio="none" fill="#656a7b" style="display:block;color:#656a7b;"><path d="M509.5 184.6L458.900 32.800C452.400 13.200 434.100 0 413.400 0H272v192h238.700c-.4-2.500-.4-5-1.200-7.400zM240 0H98.600c-20.700 0-39 13.200-45.500 32.800L2.500 184.600c-.8 2.400-.8 4.900-1.200 7.400H240V0zM0 224v240c0 26.500 21.500 48 48 48h416c26.500 0 48-21.500 48-48V224H0z"/></svg></div><div class="nm">Limón</div><div class="pr">$1.452,00</div><div class="st">Stock: 18.9</div></div>
<div class="card" style="left:287.30px;top:687.80px"><div class="img"><svg viewBox="0 0 512 512" width="29" height="29" preserveAspectRatio="none" fill="#656a7b" style="display:block;color:#656a7b;"><path d="M509.5 184.6L458.900 32.800C452.400 13.200 434.100 0 413.400 0H272v192h238.700c-.4-2.500-.4-5-1.200-7.400zM240 0H98.600c-20.700 0-39 13.200-45.500 32.800L2.500 184.600c-.8 2.400-.8 4.900-1.200 7.400H240V0zM0 224v240c0 26.500 21.500 48 48 48h416c26.500 0 48-21.500 48-48V224H0z"/></svg></div><div class="nm">Manteca 200g</div><div class="pr">$459,80</div><div class="st">Stock: 100</div></div>
<div class="card" style="left:424.45px;top:687.80px"><div class="img"><svg viewBox="0 0 512 512" width="29" height="29" preserveAspectRatio="none" fill="#656a7b" style="display:block;color:#656a7b;"><path d="M509.5 184.6L458.900 32.800C452.400 13.200 434.100 0 413.400 0H272v192h238.700c-.4-2.500-.4-5-1.200-7.400zM240 0H98.600c-20.700 0-39 13.200-45.500 32.800L2.500 184.600c-.8 2.400-.8 4.900-1.200 7.400H240V0zM0 224v240c0 26.500 21.500 48 48 48h416c26.500 0 48-21.500 48-48V224H0z"/></svg></div><div class="nm">Manzana Roja</div><div class="pr">$1.028,50</div><div class="st">Stock: 45.5</div></div>
<div class="card" style="left:561.60px;top:687.80px"><div class="img"><svg viewBox="0 0 512 512" width="29" height="29" preserveAspectRatio="none" fill="#656a7b" style="display:block;color:#656a7b;"><path d="M509.5 184.6L458.900 32.800C452.400 13.200 434.100 0 413.400 0H272v192h238.700c-.4-2.500-.4-5-1.200-7.400zM240 0H98.600c-20.700 0-39 13.200-45.500 32.800L2.500 184.600c-.8 2.400-.8 4.900-1.200 7.400H240V0zM0 224v240c0 26.500 21.500 48 48 48h416c26.500 0 48-21.500 48-48V224H0z"/></svg></div><div class="nm">Milanesa de Ternera</div><div class="pr">$4.235,00</div><div class="st">Stock: 12.3</div></div>
<div class="card" style="left:698.75px;top:687.80px"><div class="img"><svg viewBox="0 0 512 512" width="29" height="29" preserveAspectRatio="none" fill="#656a7b" style="display:block;color:#656a7b;"><path d="M509.5 184.6L458.900 32.800C452.400 13.200 434.100 0 413.400 0H272v192h238.700c-.4-2.500-.4-5-1.200-7.400zM240 0H98.600c-20.700 0-39 13.200-45.500 32.800L2.500 184.600c-.8 2.400-.8 4.900-1.200 7.400H240V0zM0 224v240c0 26.500 21.500 48 48 48h416c26.500 0 48-21.500 48-48V224H0z"/></svg></div><div class="nm">Naranja</div><div class="pr">$701,80</div><div class="st">Stock: 52.8</div></div>
<div class="card" style="left:835.90px;top:687.80px"><div class="img"><svg viewBox="0 0 512 512" width="29" height="29" preserveAspectRatio="none" fill="#656a7b" style="display:block;color:#656a7b;"><path d="M509.5 184.6L458.900 32.800C452.400 13.200 434.100 0 413.400 0H272v192h238.700c-.4-2.500-.4-5-1.200-7.400zM240 0H98.600c-20.700 0-39 13.200-45.500 32.800L2.500 184.600c-.8 2.400-.8 4.900-1.200 7.400H240V0zM0 224v240c0 26.500 21.500 48 48 48h416c26.500 0 48-21.500 48-48V224H0z"/></svg></div><div class="nm">Pan de Molde Lactal</div><div class="pr">$387,20</div><div class="st">Stock: 100</div></div>
<div class="card" style="left:973.05px;top:687.80px"><div class="img"><svg viewBox="0 0 512 512" width="29" height="29" preserveAspectRatio="none" fill="#656a7b" style="display:block;color:#656a7b;"><path d="M509.5 184.6L458.900 32.800C452.400 13.200 434.100 0 413.400 0H272v192h238.700c-.4-2.500-.4-5-1.200-7.400zM240 0H98.600c-20.700 0-39 13.200-45.500 32.800L2.500 184.600c-.8 2.400-.8 4.900-1.200 7.400H240V0zM0 224v240c0 26.500 21.500 48 48 48h416c26.500 0 48-21.500 48-48V224H0z"/></svg></div><div class="nm">Panceta</div><div class="pr">$6.292,00</div><div class="st">Stock: 5.5</div></div>
<div class="card" style="left:1110.20px;top:687.80px"><div class="img"><svg viewBox="0 0 512 512" width="29" height="29" preserveAspectRatio="none" fill="#656a7b" style="display:block;color:#656a7b;"><path d="M509.5 184.6L458.900 32.800C452.400 13.200 434.100 0 413.400 0H272v192h238.700c-.4-2.500-.4-5-1.200-7.400zM240 0H98.600c-20.700 0-39 13.200-45.500 32.800L2.500 184.600c-.8 2.400-.8 4.900-1.200 7.400H240V0zM0 224v240c0 26.500 21.500 48 48 48h416c26.500 0 48-21.500 48-48V224H0z"/></svg></div><div class="nm">Papa</div><div class="pr">$508,20</div><div class="st">Stock: 120.5</div></div>
<div class="card" style="left:1247.35px;top:687.80px"><div class="img"><svg viewBox="0 0 512 512" width="29" height="29" preserveAspectRatio="none" fill="#656a7b" style="display:block;color:#656a7b;"><path d="M509.5 184.6L458.900 32.800C452.400 13.200 434.100 0 413.400 0H272v192h238.700c-.4-2.500-.4-5-1.200-7.400zM240 0H98.600c-20.700 0-39 13.200-45.500 32.800L2.500 184.600c-.8 2.400-.8 4.900-1.200 7.400H240V0zM0 224v240c0 26.500 21.500 48 48 48h416c26.500 0 48-21.500 48-48V224H0z"/></svg></div><div class="nm">Papas Noisette 500g</div><div class="pr">$701,80</div><div class="st">Stock: 100</div></div>
<div class="card" style="left:1384.50px;top:687.80px"><div class="img"><svg viewBox="0 0 512 512" width="29" height="29" preserveAspectRatio="none" fill="#656a7b" style="display:block;color:#656a7b;"><path d="M509.5 184.6L458.900 32.800C452.400 13.200 434.100 0 413.400 0H272v192h238.700c-.4-2.500-.4-5-1.200-7.400zM240 0H98.600c-20.700 0-39 13.200-45.500 32.800L2.500 184.600c-.8 2.400-.8 4.900-1.200 7.400H240V0zM0 224v240c0 26.500 21.500 48 48 48h416c26.500 0 48-21.500 48-48V224H0z"/></svg></div><div class="nm">Papel Higiénico x4</div><div class="pr">$786,50</div><div class="st">Stock: 100</div></div>
<div class="card" style="left:13.00px;top:838.00px"><div class="img"><svg viewBox="0 0 512 512" width="29" height="29" preserveAspectRatio="none" fill="#656a7b" style="display:block;color:#656a7b;"><path d="M509.5 184.6L458.900 32.800C452.400 13.200 434.100 0 413.400 0H272v192h238.700c-.4-2.500-.4-5-1.200-7.400zM240 0H98.600c-20.700 0-39 13.200-45.500 32.800L2.500 184.600c-.8 2.400-.8 4.900-1.200 7.400H240V0zM0 224v240c0 26.500 21.500 48 48 48h416c26.500 0 48-21.500 48-48V224H0z"/></svg></div><div class="nm">Pollo Entero</div><div class="pr">$2.420,00</div><div class="st">Stock: 22.4</div></div>
<div class="card" style="left:150.15px;top:838.00px"><div class="img"><svg viewBox="0 0 512 512" width="29" height="29" preserveAspectRatio="none" fill="#656a7b" style="display:block;color:#656a7b;"><path d="M509.5 184.6L458.900 32.800C452.400 13.200 434.100 0 413.400 0H272v192h238.700c-.4-2.500-.4-5-1.200-7.400zM240 0H98.600c-20.700 0-39 13.200-45.500 32.800L2.500 184.600c-.8 2.400-.8 4.900-1.200 7.400H240V0zM0 224v240c0 26.500 21.500 48 48 48h416c26.500 0 48-21.500 48-48V224H0z"/></svg></div><div class="nm">Queso Cremoso</div><div class="pr">$4.598,00</div><div class="st">Stock: 9.6</div></div>
<div class="card" style="left:287.30px;top:838.00px"><div class="img"><svg viewBox="0 0 512 512" width="29" height="29" preserveAspectRatio="none" fill="#656a7b" style="display:block;color:#656a7b;"><path d="M509.5 184.6L458.900 32.800C452.400 13.200 434.100 0 413.400 0H272v192h238.700c-.4-2.500-.4-5-1.200-7.400zM240 0H98.600c-20.700 0-39 13.200-45.500 32.800L2.500 184.600c-.8 2.400-.8 4.900-1.200 7.400H240V0zM0 224v240c0 26.500 21.500 48 48 48h416c26.500 0 48-21.500 48-48V224H0z"/></svg></div><div class="nm">Shampoo 400ml</div><div class="pr">$605,00</div><div class="st">Stock: 100</div></div>
<div class="card" style="left:424.45px;top:838.00px"><div class="img"><svg viewBox="0 0 512 512" width="29" height="29" preserveAspectRatio="none" fill="#656a7b" style="display:block;color:#656a7b;"><path d="M509.5 184.6L458.900 32.800C452.400 13.200 434.100 0 413.400 0H272v192h238.700c-.4-2.500-.4-5-1.200-7.400zM240 0H98.600c-20.700 0-39 13.200-45.500 32.800L2.500 184.600c-.8 2.400-.8 4.900-1.200 7.400H240V0zM0 224v240c0 26.500 21.500 48 48 48h416c26.500 0 48-21.500 48-48V224H0z"/></svg></div><div class="nm">Tomate</div><div class="pr">$508,20</div><div class="st">Stock: 48.1</div></div>
<div class="card" style="left:561.60px;top:838.00px"><div class="img"><svg viewBox="0 0 512 512" width="29" height="29" preserveAspectRatio="none" fill="#656a7b" style="display:block;color:#656a7b;"><path d="M509.5 184.6L458.900 32.800C452.400 13.200 434.100 0 413.400 0H272v192h238.700c-.4-2.500-.4-5-1.200-7.400zM240 0H98.600c-20.700 0-39 13.200-45.500 32.800L2.500 184.600c-.8 2.400-.8 4.900-1.200 7.400H240V0zM0 224v240c0 26.500 21.500 48 48 48h416c26.500 0 48-21.500 48-48V224H0z"/></svg></div><div class="nm">Yerba Mate 1kg</div><div class="pr">$1.089,00</div><div class="st">Stock: 100</div></div>
<div class="card" style="left:698.75px;top:838.00px"><div class="img"><svg viewBox="0 0 512 512" width="29" height="29" preserveAspectRatio="none" fill="#656a7b" style="display:block;color:#656a7b;"><path d="M509.5 184.6L458.900 32.800C452.400 13.200 434.100 0 413.400 0H272v192h238.700c-.4-2.500-.4-5-1.200-7.400zM240 0H98.600c-20.700 0-39 13.200-45.500 32.800L2.500 184.600c-.8 2.400-.8 4.900-1.200 7.400H240V0zM0 224v240c0 26.500 21.500 48 48 48h416c26.500 0 48-21.500 48-48V224H0z"/></svg></div><div class="nm">Yogur Bebible 1L</div><div class="pr">$423,50</div><div class="st">Stock: 100</div></div>
<div class="abs" style="left:1525px;top:226px;width:15px;height:682px;background:#fafafa;border-left:1px solid #e8e8e8"></div>
<div class="abs" style="left:1529px;top:229px;width:7.800px;height:603.700px;border-radius:4px;background:#c1c1c1"></div>
</div>
<div id="right">
<div class="abs" style="left:0;top:0;width:378px;height:48px;background:#0c101b;border-bottom:1px solid #232633"></div>
<div class="abs" style="left:17.700px;top:16px;font-size:11.400px;line-height:14px;color:#b3b7c2;letter-spacing:.1px;white-space:nowrap">Tipo Factura:</div>
<div class="tf" style="left:100.2px;width:34.8px">A</div>
<div class="tf" style="left:142.2px;width:35.8px">B</div>
<div class="tf on" style="left:185.1px;width:36.1px">C</div>
<div class="tf" style="left:228.1px;width:35.1px">X</div>
<div class="abs" style="left:17.800px;top:66px;width:342.500px;height:60px;border-radius:9px;background:linear-gradient(135deg,#1a1e2b,#1e222e);border:1px solid #2d313f">
<div class="abs" style="left:14px;top:11px;width:36.500px;height:36.500px;border-radius:50%;background:linear-gradient(135deg,#0cac7c,#069066)"></div>
<div class="abs" style="left:26px;top:21.500px"><svg viewBox="0 0 448 512" width="12.5" height="14.5" preserveAspectRatio="none" fill="#e6e8ec" style="display:block;color:#e6e8ec;"><circle cx="224" cy="128" r="128"/><path d="M134 288h180a134 134 0 0 1 134 134v42a48 48 0 0 1-48 48H48a48 48 0 0 1-48-48v-42a134 134 0 0 1 134-134z"/></svg></div>
<div class="abs" style="left:61.800px;top:15.500px;font-weight:bold;font-size:13.600px;line-height:16px;letter-spacing:.08px;color:#f3f4f6;white-space:nowrap">Cliente genérico TakePOS</div>
<div class="abs" style="left:61.800px;top:31px;font-size:11px;line-height:13px;letter-spacing:.22px;color:#a7abb8;white-space:nowrap">Cliente • Click para cambiar</div>
<div class="abs" style="left:317.300px;top:22.800px"><svg viewBox="0 0 16 24" width="8.6" height="12.8" preserveAspectRatio="none" fill="#6e7383" style="display:block;color:#6e7383;"><path d="M3.500 3l9 9l-9 9" fill="none" stroke="currentColor" stroke-width="3.400" stroke-linecap="round" stroke-linejoin="round"/></svg></div>
</div>
<div class="abs" style="left:0;top:144px;width:378px;height:1px;background:#222637"></div>
<div class="abs" style="left:164.400px;top:321px"><svg viewBox="0 0 576 512" width="48" height="43" preserveAspectRatio="none" fill="#272c3b" style="display:block;color:#272c3b;"><path d="M528 301l47-208c4-15-8-29-23-29H159l-9-45C148 8 138 0 126 0H24A24 24 0 0 0 0 24v16a24 24 0 0 0 24 24h70l70 343a56 56 0 1 0 67 9h210a56 56 0 1 0 64-10l5-25c4-15-8-29-23-29H218l-13-64h300c11 0 21-8 23-19z"/></svg></div>
<div class="abs" style="left:0;top:375px;width:378px;text-align:center;font-size:14.600px;line-height:18px;color:#676c7c;letter-spacing:.32px">El carrito está vacío</div>
<div class="abs" style="left:0;top:403px;width:378px;text-align:center;font-size:11.800px;line-height:15px;color:#676c7c;letter-spacing:.4px">Agrega productos para comenzar</div>
<div class="abs" style="left:0;top:593px;width:378px;height:1px;background:#242838"></div>
<div class="abs" style="left:10.700px;top:607px;font-size:11.3px;font-weight:normal;line-height:16px;color:#e5e7eb;white-space:nowrap">Subtotal</div>
<div class="abs" style="right:9.900px;top:607px;font-size:11.9px;font-weight:normal;line-height:16px;color:#e5e7eb;white-space:nowrap">$0.00</div>
<div class="abs" style="left:10.700px;top:627px;font-size:11.3px;font-weight:normal;line-height:16px;color:#e5e7eb;white-space:nowrap">IVA incl.</div>
<div class="abs" style="right:9.900px;top:627px;font-size:11.9px;font-weight:normal;line-height:16px;color:#e5e7eb;white-space:nowrap">$0,00</div>
<div class="abs" style="left:10.700px;top:646px;width:356.500px;height:1px;background:#262b3b"></div>
<div class="abs" style="left:10.700px;top:656px;font-size:17.2px;font-weight:bold;line-height:16px;color:#f3f4f6;white-space:nowrap">Total</div>
<div class="abs" style="right:9.900px;top:656px;font-size:18.6px;font-weight:bold;line-height:16px;color:#4a9ff8;white-space:nowrap">$0.00</div>
<div class="ab " style="left:11.00px;width:67px;top:686.2px;height:39.5px;background:linear-gradient(135deg,#0ea5e9,#0279bf)"><svg viewBox="0 0 512 512" width="13" height="13" preserveAspectRatio="none" fill="#fff" style="display:block;color:#fff;position:absolute;left:27.00px;top:6.70px"><path fill-rule="evenodd" d="M208 0a208 208 0 0 1 164.700 335L503 465.300a27 27 0 0 1-38 38L334.700 373A208 208 0 1 1 208 0zm0 64a144 144 0 1 0 0 288a144 144 0 0 0 0-288z"/><path d="M196 100h24v24c16 1 30 6 40 14l-14 22c-10-7-22-10-34-10c-14 0-22 6-22 14c0 10 10 14 32 20c30 9 50 20 50 48c0 24-18 42-52 46v26h-24v-25c-20-2-38-9-50-20l16-22c12 10 28 16 44 16c16 0 26-6 26-16c0-10-8-15-34-22c-30-9-48-20-48-46c0-24 18-40 46-44z"/></svg><div class="lb" style="">Precio</div><div class="k">F3</div></div>
<div class="ab " style="left:83.00px;width:68px;top:686.2px;height:39.5px;background:linear-gradient(135deg,#f7931e,#e06c1c)"><svg viewBox="0 0 640 512" width="17" height="13" preserveAspectRatio="none" fill="#fdeedd" style="display:block;color:#fdeedd;position:absolute;left:25.50px;top:6.70px"><path d="M96 464h448a16 16 0 0 1 16 16v16a16 16 0 0 1-16 16H96a16 16 0 0 1-16-16v-16a16 16 0 0 1 16-16z"/><path d="M296 100h48v380h-48z"/><circle cx="320" cy="80" r="64"/><path d="M88 72h464a16 16 0 0 1 16 16v16a16 16 0 0 1-16 16H88a16 16 0 0 1-16-16V88a16 16 0 0 1 16-16z"/><path fill-rule="evenodd" d="M128 100l118 236c0 53-57 80-118 80S10 389 10 336zM128 190L66 320h124zM512 100l118 236c0 53-57 80-118 80s-118-27-118-80zM512 190l-62 130h124z"/></svg><div class="lb" style="color:#fdeedd">Balanza</div><div class="abs" style="right:2px;top:2px;width:13.500px;height:11.800px;border-radius:2px;background:#6a5cd8"><svg viewBox="0 0 448 512" width="6" height="7" preserveAspectRatio="none" fill="#4a45a0" style="display:block;color:#4a45a0;position:absolute;left:3.700px;top:2.400px"><path d="M224 512a64 64 0 0 0 64-64H160a64 64 0 0 0 64 64zm215-150c-19-21-55-52-55-154c0-78-54-140-128-155V32a32 32 0 1 0-64 0v21C118 68 64 130 64 208c0 102-36 133-55 154a31 31 0 0 0-9 22c0 16 13 32 32 32h384c19 0 32-16 32-32a31 31 0 0 0-9-22z"/></svg></div></div>
<div class="ab " style="left:155.00px;width:68px;top:686.2px;height:39.5px;background:#3a2a20;box-shadow:inset 0 0 0 1px #85561b"><svg viewBox="0 0 100 100" width="10.3" height="10.3" preserveAspectRatio="none" fill="#fbbf24" style="display:block;color:#fbbf24;position:absolute;left:28.85px;top:8.05px"><circle cx="16" cy="16" r="15.500"/><circle cx="84" cy="84" r="15.500"/><path d="M88 12L12 88" stroke="currentColor" stroke-width="21" stroke-linecap="round" fill="none"/></svg><div class="lb" style="color:#fbbf24">PROMOS</div><div class="k">F5</div></div>
<div class="ab " style="left:227.10px;width:68px;top:686.2px;height:39.5px;background:#211c45;box-shadow:inset 0 0 0 1px #47349a"><svg viewBox="0 0 512 512" width="13" height="12.5" preserveAspectRatio="none" fill="#a78bfa" style="display:block;color:#a78bfa;position:absolute;left:27.50px;top:6.95px"><path fill-rule="evenodd" d="M32 448a32 32 0 0 0 32 32h160V320H32zm256 32h160a32 32 0 0 0 32-32V320H288zM480 160h-42c6-12 10-25 10-40c0-49-40-88-88-88c-42 0-69 21-103 68c-35-47-62-68-103-68c-49 0-88 39-88 88c0 15 3 28 10 40H32a32 32 0 0 0-32 32v80a16 16 0 0 0 16 16h480a16 16 0 0 0 16-16v-80a32 32 0 0 0-32-32zm-326 0a40 40 0 0 1 0-80c20 0 35 3 86 80zm206-80a40 40 0 0 1 0 80h-86c51-77 65-80 86-80z"/></svg><div class="lb" style="color:#a78bfa">COMBOS</div><div class="k">F6</div></div>
<div class="ab dk" style="left:300.00px;width:67px;top:686.2px;height:39.5px;"><svg viewBox="0 0 512 512" width="13" height="13" preserveAspectRatio="none" fill="#f1f1f1" style="display:block;color:#f1f1f1;position:absolute;left:27.00px;top:6.70px"><path fill-rule="evenodd" d="M0 252V48A48 48 0 0 1 48 0h204a48 48 0 0 1 34 14l212 212a48 48 0 0 1 0 68L294 498a48 48 0 0 1-68 0L14 286a48 48 0 0 1-14-34zm112-188a48 48 0 1 0 0 96a48 48 0 0 0 0-96z"/></svg><div class="lb" style="">Desc.</div><div class="k">F7</div></div>
<div class="ab " style="left:11.00px;width:67px;top:731.4px;height:28.5px;background:#232836;box-shadow:inset 0 0 0 1px #363c4c"><svg viewBox="0 0 448 512" width="10.8" height="12.8" preserveAspectRatio="none" fill="#e5e7eb" style="display:block;color:#e5e7eb;position:absolute;left:28.10px;top:7.85px"><path d="M432 32H312l-9-19a24 24 0 0 0-22-13H167a24 24 0 0 0-21 13l-10 19H16A16 16 0 0 0 0 48v32a16 16 0 0 0 16 16h416a16 16 0 0 0 16-16V48a16 16 0 0 0-16-16zM53 467a48 48 0 0 0 48 45h246a48 48 0 0 0 48-45l21-339H32z"/></svg><div class="k">F8</div></div>
<div class="ab dk" style="left:11.00px;width:67px;top:767.1px;height:38.7px;"><svg viewBox="0 0 512 512" width="13" height="13" preserveAspectRatio="none" fill="#f1f1f1" style="display:block;color:#f1f1f1;position:absolute;left:27.00px;top:6.70px"><path fill-rule="evenodd" d="M448 192V78a32 32 0 0 0-9-23L393 9a32 32 0 0 0-23-9H96a32 32 0 0 0-32 32v160a64 64 0 0 0-64 64v112a16 16 0 0 0 16 16h48v96a32 32 0 0 0 32 32h320a32 32 0 0 0 32-32v-96h48a16 16 0 0 0 16-16V256a64 64 0 0 0-64-64zm-64 256H128v-96h256zm0-224H128V64h192v48a16 16 0 0 0 16 16h48zm48 72a24 24 0 1 1 0-48a24 24 0 0 1 0 48z"/></svg><div class="lb" style="">Imprimir</div><div class="k">F10</div></div>
<div class="ab dk" style="left:83.00px;width:68px;top:767.1px;height:38.7px;"><svg viewBox="0 0 512 512" width="13" height="13" preserveAspectRatio="none" fill="#f1f1f1" style="display:block;color:#f1f1f1;position:absolute;left:27.50px;top:6.70px"><path fill-rule="evenodd" d="M61 0h246a20 20 0 0 1 20 20v93a20 20 0 0 1-20 20h-92v62h225a40 40 0 0 1 38 28l32 217v40a32 32 0 0 1-32 32H32a32 32 0 0 1-32-32v-40l32-217a40 40 0 0 1 38-28h73v-62H61a20 20 0 0 1-20-20V20A20 20 0 0 1 61 0zm44 52a15 15 0 0 0 0 30h158a15 15 0 0 0 0-30zM89 256a24 24 0 1 0 48 0a24 24 0 1 0-48 0zM184 256a24 24 0 1 0 48 0a24 24 0 1 0-48 0zM279 256a24 24 0 1 0 48 0a24 24 0 1 0-48 0zM370 256a24 24 0 1 0 48 0a24 24 0 1 0-48 0zM139 334a24 24 0 1 0 48 0a24 24 0 1 0-48 0zM230 334a24 24 0 1 0 48 0a24 24 0 1 0-48 0zM325 334a24 24 0 1 0 48 0a24 24 0 1 0-48 0zM184 420a16 16 0 0 0 0 32h153a16 16 0 0 0 0-32z"/></svg><div class="lb" style="">Caja</div><div class="k">F11</div></div>
<div class="ab dk" style="left:155.00px;width:68px;top:767.1px;height:38.7px;"><svg viewBox="0 0 576 512" width="14" height="11.5" preserveAspectRatio="none" fill="#f1f1f1" style="display:block;color:#f1f1f1;position:absolute;left:27.00px;top:7.45px"><path fill-rule="evenodd" d="M48 64h480a48 48 0 0 1 48 48v288a48 48 0 0 1-48 48H48a48 48 0 0 1-48-48V112a48 48 0 0 1 48-48zM60 124h56v56h-56zM140 124h56v56h-56zM220 124h56v56h-56zM300 124h56v56h-56zM380 124h56v56h-56zM460 124h56v56h-56zM100 212h56v56h-56zM180 212h56v56h-56zM260 212h56v56h-56zM340 212h56v56h-56zM420 212h56v56h-56zM60 300h56v56H60zM460 300h56v56h-56zM148 300h280v56H148z"/></svg><div class="lb" style="">Atajos</div><div class="k">F1</div></div>
<div class="ab dk" style="left:227.10px;width:68px;top:767.1px;height:38.7px;"><svg viewBox="0 0 512 512" width="12.5" height="12.5" preserveAspectRatio="none" fill="#f1f1f1" style="display:block;color:#f1f1f1;position:absolute;left:27.75px;top:6.95px"><path fill-rule="evenodd" d="M218.3 69.8L223.6 8.1L288.4 8.1L293.7 69.8L361.0 97.6L408.4 57.8L454.2 103.6L414.4 151.0L442.2 218.3L503.9 223.6L503.9 288.4L442.2 293.7L414.4 361.0L454.2 408.4L408.4 454.2L361.0 414.4L293.7 442.2L288.4 503.9L223.6 503.9L218.3 442.2L151.0 414.4L103.6 454.2L57.8 408.4L97.6 361.0L69.8 293.7L8.1 288.4L8.1 223.6L69.8 218.3L97.6 151.0L57.8 103.6L103.6 57.8L151.0 97.6zM256 170a86 86 0 1 0 0 172a86 86 0 0 0 0-172z" stroke-linejoin="round" stroke="currentColor" stroke-width="20"/></svg><div class="lb" style="">Config</div></div>
<div class="ab " style="left:11.00px;width:67px;top:814.1px;height:38.7px;background:linear-gradient(135deg,#5558ea,#4338d6)"><svg viewBox="0 0 512 512" width="13" height="13" preserveAspectRatio="none" fill="#fff" style="display:block;color:#fff;position:absolute;left:27.00px;top:6.70px"><path d="M256 40a216 216 0 1 1-187 324" fill="none" stroke="currentColor" stroke-width="54" stroke-linecap="round"/><path d="M256 40A216 216 0 0 0 84 126" fill="none" stroke="currentColor" stroke-width="54"/><path d="M20 40l0 150a10 10 0 0 0 10 10l150 0z"/><path d="M256 150v116l76 56" fill="none" stroke="currentColor" stroke-width="46" stroke-linecap="round" stroke-linejoin="round"/></svg><div class="lb" style="">Historial</div></div>
<div class="ab " style="left:83.00px;width:68px;top:814.1px;height:38.7px;background:linear-gradient(135deg,#f7931e,#e06c1c)"><svg viewBox="0 0 512 512" width="13" height="13" preserveAspectRatio="none" fill="#fdeedd" style="display:block;color:#fdeedd;position:absolute;left:27.50px;top:6.70px"><circle cx="256" cy="256" r="220" fill="none" stroke="currentColor" stroke-width="54"/><path d="M104 104l304 304" stroke="currentColor" stroke-width="54"/></svg><div class="lb" style="color:#fdeedd">Anular</div></div>
<div class="ab " style="left:155.00px;width:68px;top:814.1px;height:38.7px;background:linear-gradient(135deg,#f04346,#de2528)"><svg viewBox="0 0 512 512" width="13" height="13" preserveAspectRatio="none" fill="#fff" style="display:block;color:#fff;position:absolute;left:27.50px;top:6.70px"><path d="M96 130A216 216 0 1 1 70 360" fill="none" stroke="currentColor" stroke-width="56" stroke-linecap="round"/><path d="M20 20l0 180a12 12 0 0 0 12 12l180 0z"/></svg><div class="lb" style="">NC/Reemb.</div></div>
<div class="abs" style="left:11px;top:861px;width:356px;height:36px;border-radius:7px;background:#303948">
<div class="abs" style="left:125.700px;top:11px"><svg viewBox="0 0 576 512" width="15.3" height="12" preserveAspectRatio="none" fill="#fff" style="display:block;color:#fff;"><path fill-rule="evenodd" d="M0 432a48 48 0 0 0 48 48h480a48 48 0 0 0 48-48V256H0zm192-68a12 12 0 0 1 12-12h136a12 12 0 0 1 12 12v40a12 12 0 0 1-12 12H204a12 12 0 0 1-12-12zm-128 0a12 12 0 0 1 12-12h72a12 12 0 0 1 12 12v40a12 12 0 0 1-12 12H76a12 12 0 0 1-12-12zM576 80v48H0V80a48 48 0 0 1 48-48h480a48 48 0 0 1 48 48z"/></svg></div>
<div class="abs" style="left:150.400px;top:9px;font-weight:bold;font-size:13.600px;line-height:17px;color:#fff;white-space:nowrap;letter-spacing:.1px">Pagar</div>
<div class="abs" style="left:196.900px;top:9px;font-weight:bold;font-size:13.600px;line-height:17px;color:#fff;white-space:nowrap">$0.00</div>
</div>
</div>
</div>
<div class="abs" style="left:0;top:0;width:1920px;height:1px;background:#262626"></div>
<div class="abs" style="left:0;top:1px;width:1920px;height:1px;background:#4c4c4c"></div>
<div class="abs" style="left:0;top:2px;width:1px;height:900px;background:#50525f"></div>
<div class="abs" style="left:1919px;top:2px;width:1px;height:899px;background:#3f4250"></div>
<div class="abs" style="left:0;top:0;width:1920px;height:910px;border-radius:0 0 10px 10px;border:1px solid transparent;border-bottom-color:#555867;pointer-events:none"></div>
</body></html>
